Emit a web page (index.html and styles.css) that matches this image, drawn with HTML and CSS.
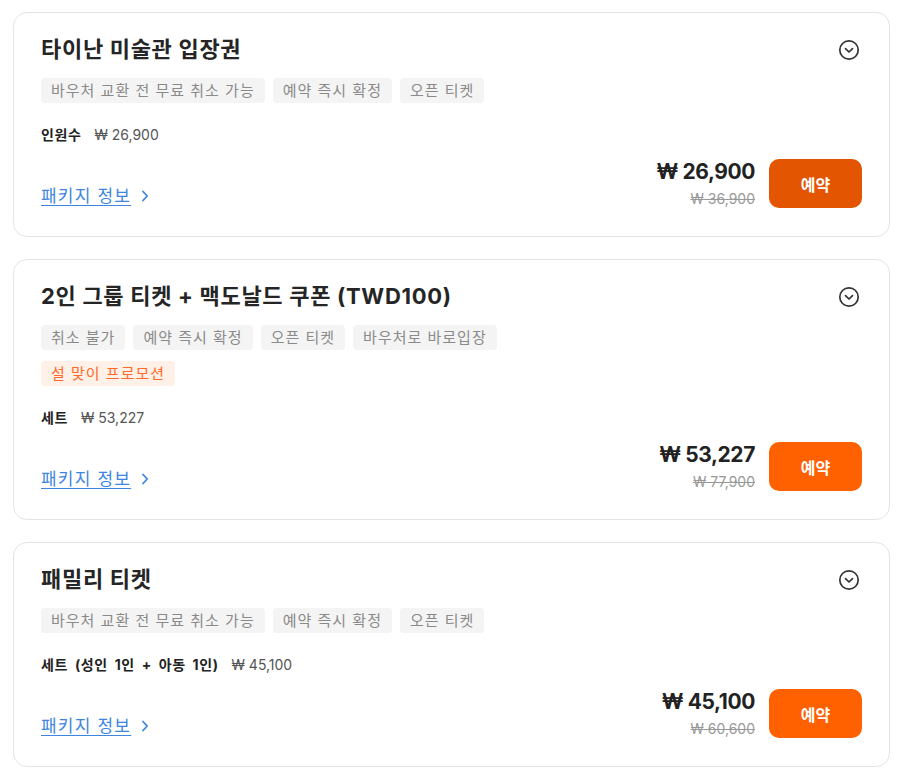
FILE: index.html
```html
<!DOCTYPE html>
<html lang="ko">
<head>
<meta charset="utf-8">
<title>패키지</title>
<link rel="stylesheet" href="styles.css">
</head>
<body>
<div class="list">
  <section class="card">
    <div class="head">
      <h2 class="title">타이난 미술관 입장권</h2>
      <svg class="toggle" viewBox="0 0 22 22" width="22" height="22"><circle cx="11" cy="11" r="9.2" fill="none" stroke="#333" stroke-width="1.7"/><path d="M7.5 9.6 L11 13 L14.5 9.6" fill="none" stroke="#333" stroke-width="1.7" stroke-linecap="round" stroke-linejoin="round"/></svg>
    </div>
    <div class="tags">
      <span class="tag">바우처 교환 전 무료 취소 가능</span>
      <span class="tag">예약 즉시 확정</span>
      <span class="tag">오픈 티켓</span>
    </div>
    <div class="info"><b>인원수</b><span class="unit">₩ 26,900</span></div>
    <div class="foot">
      <a class="more" href="#">패키지 정보</a><svg class="chev" viewBox="0 0 8 12" width="8" height="12"><path d="M2 1.5 L6.2 6 L2 10.5" fill="none" stroke="#3d86e0" stroke-width="1.8" stroke-linecap="round" stroke-linejoin="round"/></svg>
      <div class="buy">
        <div class="prices"><div class="now">₩ 26,900</div><div class="old">₩ 36,900</div></div>
        <button class="btn btn-dark">예약</button>
      </div>
    </div>
  </section>

  <section class="card">
    <div class="head">
      <h2 class="title">2인 그룹 티켓 + 맥도날드 쿠폰 (TWD100)</h2>
      <svg class="toggle" viewBox="0 0 22 22" width="22" height="22"><circle cx="11" cy="11" r="9.2" fill="none" stroke="#333" stroke-width="1.7"/><path d="M7.5 9.6 L11 13 L14.5 9.6" fill="none" stroke="#333" stroke-width="1.7" stroke-linecap="round" stroke-linejoin="round"/></svg>
    </div>
    <div class="tags">
      <span class="tag">취소 불가</span>
      <span class="tag">예약 즉시 확정</span>
      <span class="tag">오픈 티켓</span>
      <span class="tag">바우처로 바로입장</span>
    </div>
    <div class="tags tags-promo">
      <span class="tag promo">설 맞이 프로모션</span>
    </div>
    <div class="info"><b>세트</b><span class="unit">₩ 53,227</span></div>
    <div class="foot">
      <a class="more" href="#">패키지 정보</a><svg class="chev" viewBox="0 0 8 12" width="8" height="12"><path d="M2 1.5 L6.2 6 L2 10.5" fill="none" stroke="#3d86e0" stroke-width="1.8" stroke-linecap="round" stroke-linejoin="round"/></svg>
      <div class="buy">
        <div class="prices"><div class="now">₩ 53,227</div><div class="old">₩ 77,900</div></div>
        <button class="btn">예약</button>
      </div>
    </div>
  </section>

  <section class="card">
    <div class="head">
      <h2 class="title">패밀리 티켓</h2>
      <svg class="toggle" viewBox="0 0 22 22" width="22" height="22"><circle cx="11" cy="11" r="9.2" fill="none" stroke="#333" stroke-width="1.7"/><path d="M7.5 9.6 L11 13 L14.5 9.6" fill="none" stroke="#333" stroke-width="1.7" stroke-linecap="round" stroke-linejoin="round"/></svg>
    </div>
    <div class="tags">
      <span class="tag">바우처 교환 전 무료 취소 가능</span>
      <span class="tag">예약 즉시 확정</span>
      <span class="tag">오픈 티켓</span>
    </div>
    <div class="info"><b>세트 (성인 1인 + 아동 1인)</b><span class="unit">₩ 45,100</span></div>
    <div class="foot">
      <a class="more" href="#">패키지 정보</a><svg class="chev" viewBox="0 0 8 12" width="8" height="12"><path d="M2 1.5 L6.2 6 L2 10.5" fill="none" stroke="#3d86e0" stroke-width="1.8" stroke-linecap="round" stroke-linejoin="round"/></svg>
      <div class="buy">
        <div class="prices"><div class="now">₩ 45,100</div><div class="old">₩ 60,600</div></div>
        <button class="btn">예약</button>
      </div>
    </div>
  </section>
</div>
</body>
</html>
```
FILE: styles.css
```css
* { box-sizing: border-box; }
body {
  margin: 0;
  padding: 12px 10px 0 13px;
  background: #fff;
  font-family: "Inter", "Noto Sans CJK KR", sans-serif;
  color: #222;
}
.list {
  display: flex;
  flex-direction: column;
  gap: 22px;
  width: 877px;
}
.card {
  border: 1px solid #e4e4e4;
  border-radius: 14px;
  padding: 22px 27px 28px 27px;
  background: #fff;
}
.head {
  display: flex;
  justify-content: space-between;
  align-items: flex-start;
}
.title {
  margin: 0;
  font-size: 22px;
  line-height: 28px;
  font-weight: 700;
  color: #252525;
  letter-spacing: 0.7px;
}
.toggle {
  display: block;
  margin: 4px 2px 0 0;
}
.tags {
  display: flex;
  flex-wrap: wrap;
  gap: 8px;
  margin-top: 15px;
}
.tags-promo { margin-top: 11px; }
.tag {
  display: inline-block;
  height: 25px;
  line-height: 25px;
  padding: 0 10px;
  border-radius: 4px;
  background: #f4f4f4;
  color: #8a8a8a;
  font-size: 15px;
  letter-spacing: 1px;
}
.tag.promo {
  background: #fff0e8;
  color: #ff6a2a;
}
.info {
  margin-top: 22px;
  font-size: 14px;
  line-height: 20px;
  color: #222;
  display: flex;
  align-items: center;
}
.info b {
  font-weight: 700;
  letter-spacing: 0.6px;
  word-spacing: 3px;
}
.unit {
  margin-left: 13px;
  color: #555;
}
.foot {
  margin-top: 14px;
  display: flex;
  align-items: flex-end;
}
.more {
  font-size: 17px;
  line-height: 22px;
  color: #3d86e0;
  text-decoration: underline;
  text-underline-offset: 3px;
  letter-spacing: 1.2px;
  margin-bottom: 1px;
}
.chev { margin: 0 0 6px 10px; display: block; }
.buy {
  margin-left: auto;
  display: flex;
  align-items: center;
  gap: 14px;
}
.prices { text-align: right; }
.now {
  font-size: 21px;
  line-height: 24px;
  font-weight: 700;
  color: #222;
  letter-spacing: -0.4px;
}
.old {
  margin-top: 6px;
  font-size: 14px;
  line-height: 18px;
  color: #999;
  text-decoration: line-through;
}
.btn {
  width: 93px;
  height: 49px;
  border: 0;
  border-radius: 10px;
  background: #ff6000;
  color: #fff;
  font-family: "Noto Sans CJK KR", sans-serif;
  font-size: 16px;
  font-weight: 700;
}
.btn-dark { background: #e35500; }
```
